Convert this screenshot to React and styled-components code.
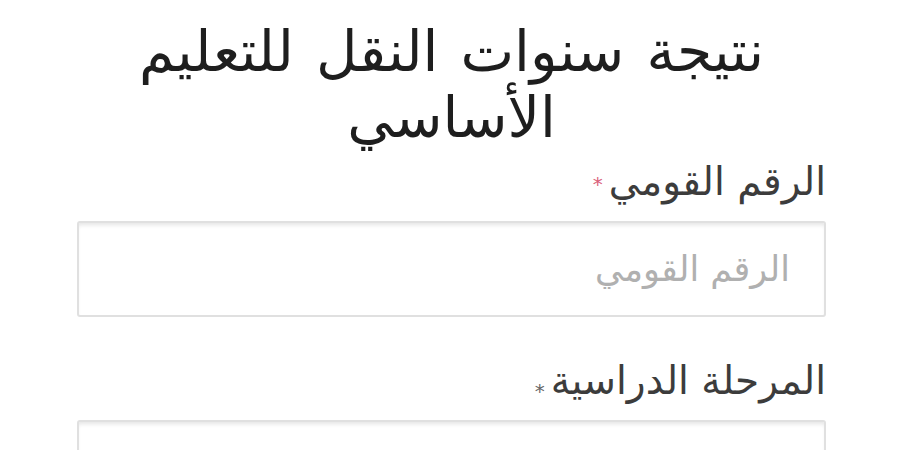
import React from "react";
import styled, { createGlobalStyle } from "styled-components";

const Global = createGlobalStyle`
  html, body { margin: 0; padding: 0; background: #fff; }
  body { font-family: "DejaVu Sans", "Noto Sans", sans-serif; }
`;

const Page = styled.div`
  direction: rtl;
  width: 900px;
  height: 450px;
  overflow: hidden;
  box-sizing: border-box;
  padding: 18px 74px 0 77px;
  background: #fff;
`;

const Title = styled.h1`
  margin: 0;
  text-align: center;
  font-size: 57px;
  font-weight: 400;
  line-height: 66px;
  word-spacing: 4px;
  color: #1e1e1e;
`;

const Field = styled.div`
  display: flex;
  flex-direction: column;
  margin-top: ${(p) => p.$top}px;
`;

const Label = styled.label`
  font-size: 39px;
  line-height: 40px;
  color: #3c3c3c;
  margin-bottom: 19px;
`;

const Star = styled.span`
  color: ${(p) => (p.$muted ? "#666" : "#d9607a")};
  margin-right: 6px;
  font-size: 20px;
  line-height: 0;
  vertical-align: ${(p) => (p.$muted ? "-4px" : "4px")};
`;

const Input = styled.input`
  direction: rtl;
  box-sizing: border-box;
  width: 100%;
  height: 96px;
  border: 2px solid #e0e0e0;
  border-radius: 3px;
  box-shadow: inset 0 4px 4px -2px #e4e4e4;
  padding: 0 34px;
  font-family: inherit;
  font-size: 35px;
  color: #333;
  background: #fff;
  outline: none;
  &::placeholder { color: #b0b0b0; }
`;

export default function App() {
  return (
    <>
      <Global />
      <Page>
        <Title>
          نتيجة سنوات النقل للتعليم
          <br />
          الأساسي
        </Title>
        <Field $top={12}>
          <Label>
            الرقم القومي<Star>*</Star>
          </Label>
          <Input placeholder="الرقم القومي" />
        </Field>
        <Field $top={44}>
          <Label>
            المرحلة الدراسية<Star $muted>*</Star>
          </Label>
          <Input />
        </Field>
      </Page>
    </>
  );
}
